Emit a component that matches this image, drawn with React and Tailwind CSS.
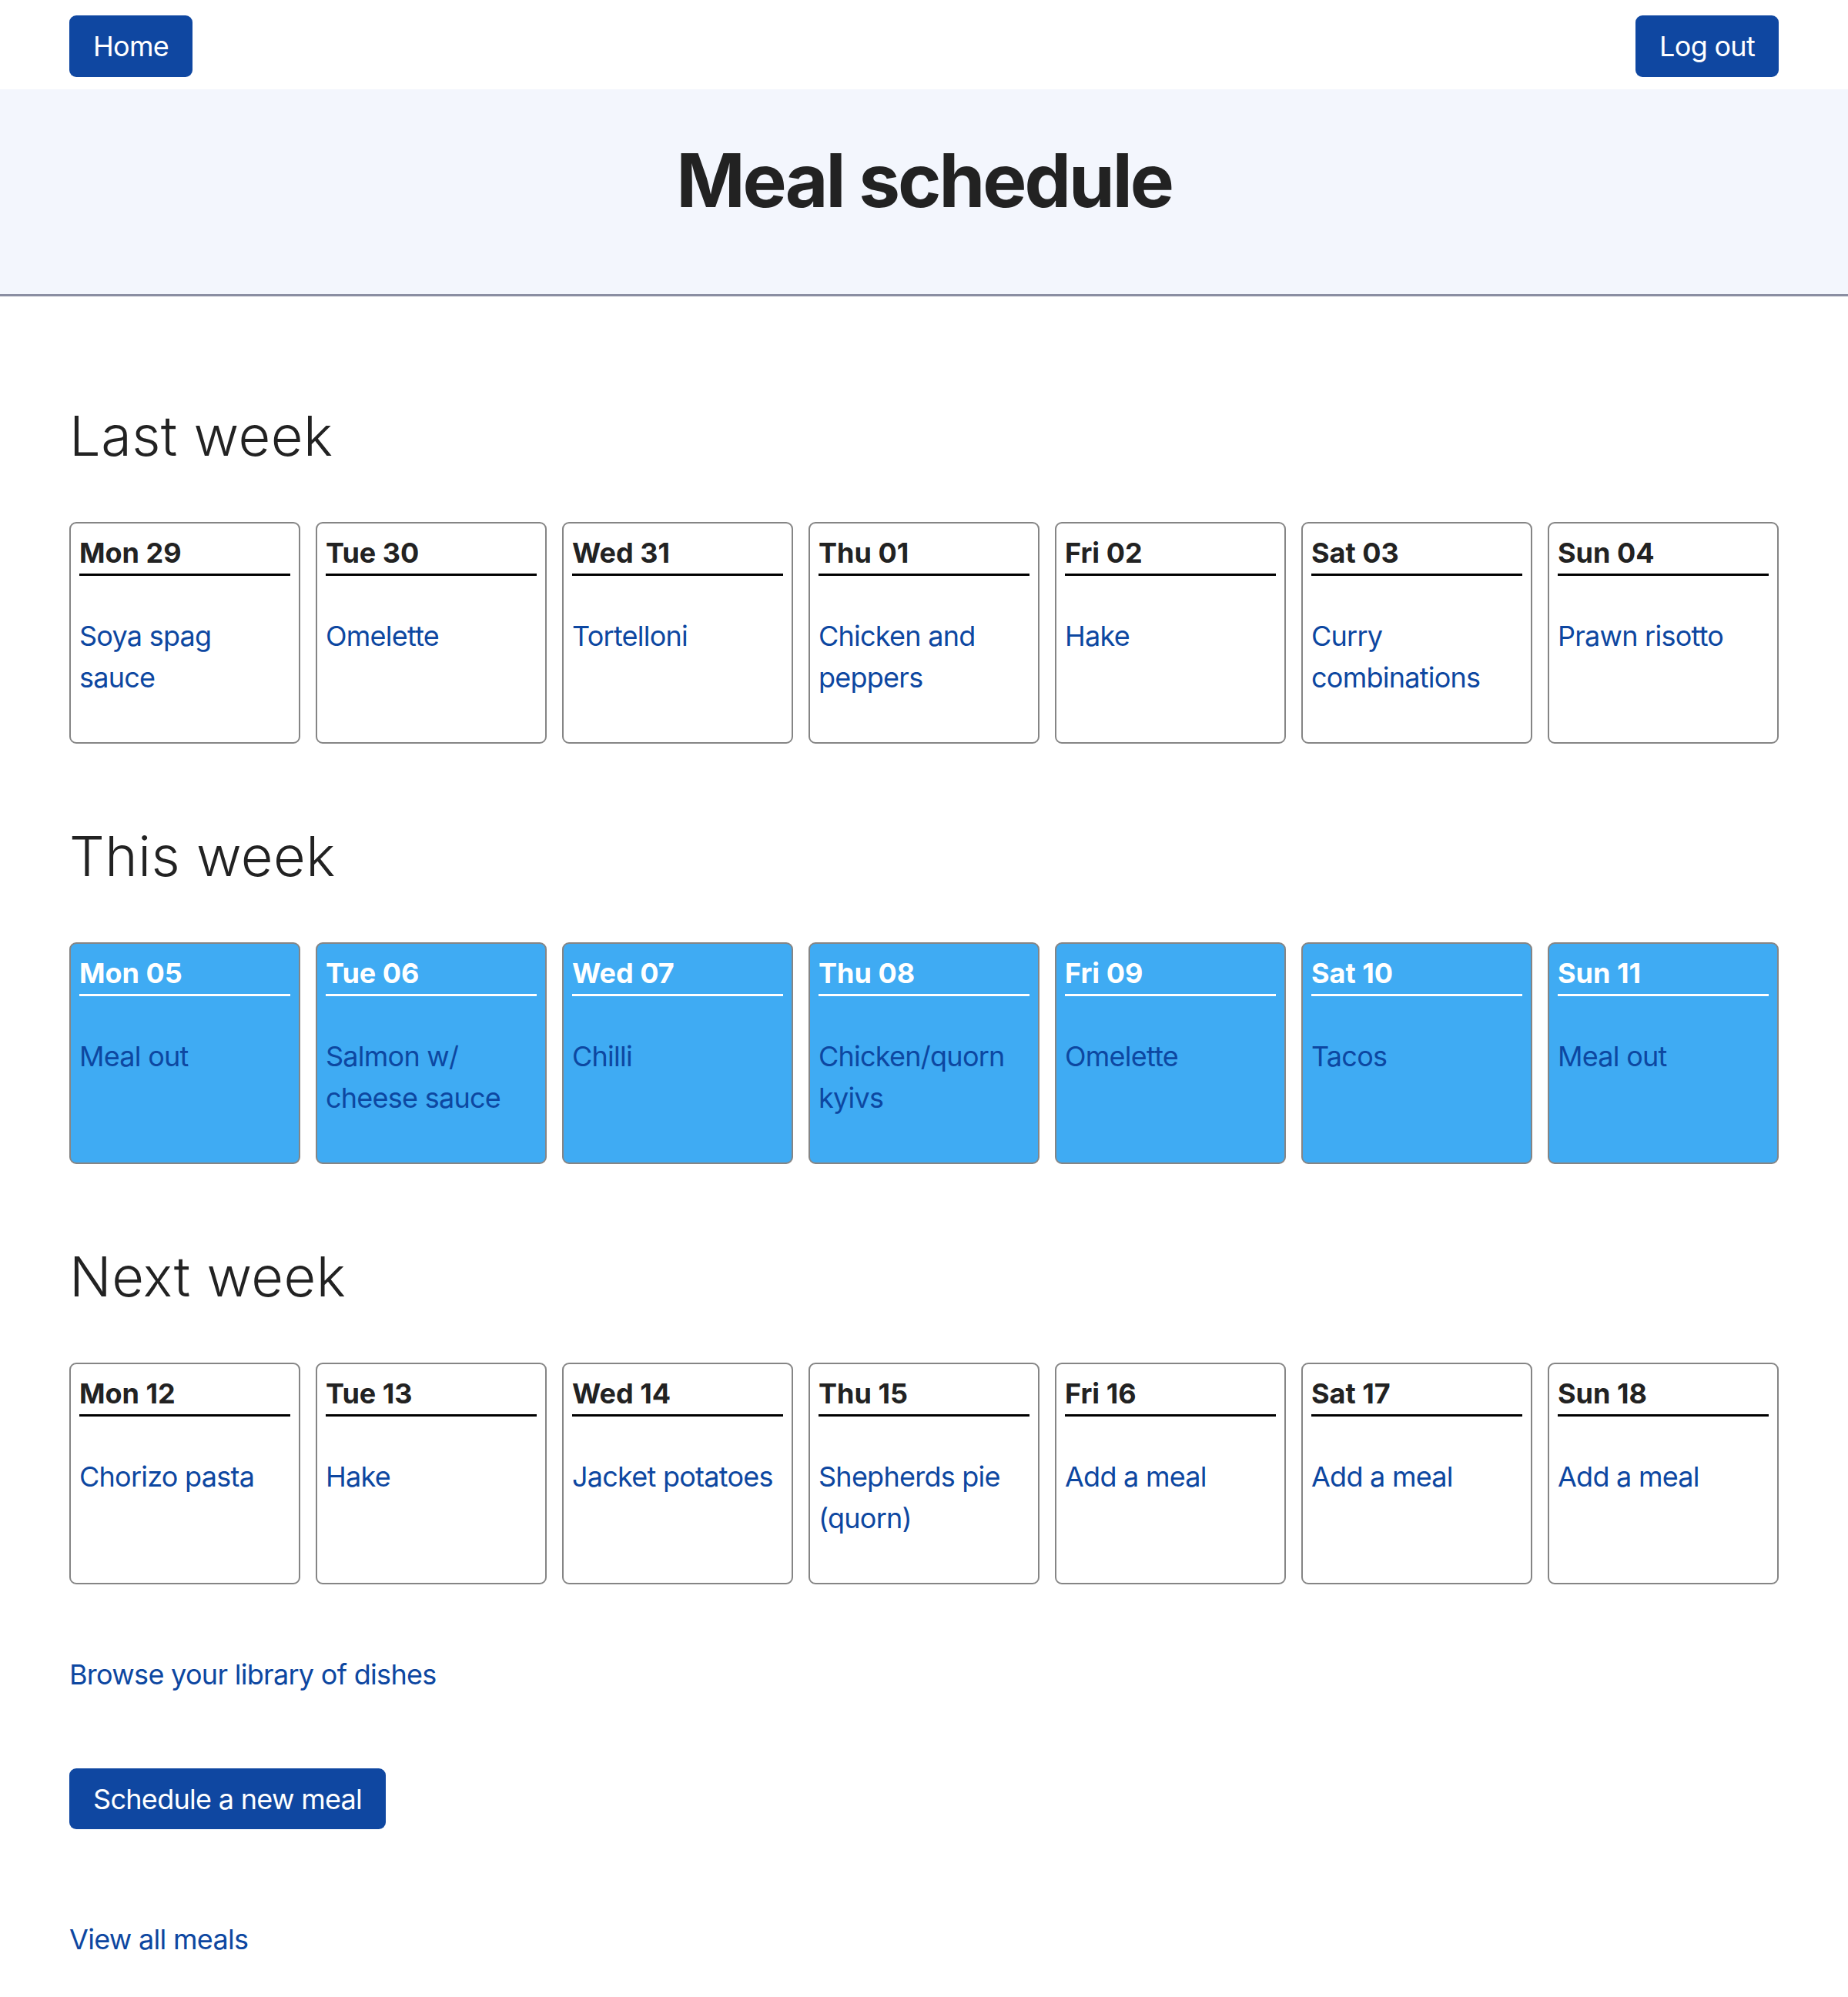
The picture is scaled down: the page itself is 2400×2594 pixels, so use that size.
import React from "react";

const weeks = [
  {
    title: "Last week",
    current: false,
    days: [
      { day: "Mon 29", meal: "Soya spag sauce" },
      { day: "Tue 30", meal: "Omelette" },
      { day: "Wed 31", meal: "Tortelloni" },
      { day: "Thu 01", meal: "Chicken and peppers" },
      { day: "Fri 02", meal: "Hake" },
      { day: "Sat 03", meal: "Curry combinations" },
      { day: "Sun 04", meal: "Prawn risotto" },
    ],
  },
  {
    title: "This week",
    current: true,
    days: [
      { day: "Mon 05", meal: "Meal out" },
      { day: "Tue 06", meal: "Salmon w/ cheese sauce" },
      { day: "Wed 07", meal: "Chilli" },
      { day: "Thu 08", meal: "Chicken/quorn kyivs" },
      { day: "Fri 09", meal: "Omelette" },
      { day: "Sat 10", meal: "Tacos" },
      { day: "Sun 11", meal: "Meal out" },
    ],
  },
  {
    title: "Next week",
    current: false,
    days: [
      { day: "Mon 12", meal: "Chorizo pasta" },
      { day: "Tue 13", meal: "Hake" },
      { day: "Wed 14", meal: "Jacket potatoes" },
      { day: "Thu 15", meal: "Shepherds pie (quorn)" },
      { day: "Fri 16", meal: "Add a meal" },
      { day: "Sat 17", meal: "Add a meal" },
      { day: "Sun 18", meal: "Add a meal" },
    ],
  },
];

const DayCard = ({ day, meal, current }) => (
  <div
    className={`h-[288px] rounded-[9px] border-2 border-[#858585] px-[11px] pt-[11px] ${
      current ? "bg-[#3fabf3]" : "bg-white"
    }`}
  >
    <div
      className={`border-b-[3px] text-[36px] font-bold leading-[54px] ${
        current ? "border-white text-white" : "border-black text-[#222]"
      }`}
    >
      {day}
    </div>
    <a
      href="#"
      className="mt-[51px] block text-[36px] leading-[54px] tracking-[-0.75px] text-[#0d47a1]"
    >
      {meal}
    </a>
  </div>
);

const Week = ({ title, days, current }) => (
  <section>
    <h2 className="text-[72px] font-light leading-[86px] tracking-[0.5px] text-[#222]">
      {title}
    </h2>
    <div className="mt-[69px] grid grid-cols-7 gap-[20px]">
      {days.map((d) => (
        <DayCard key={d.day} {...d} current={current} />
      ))}
    </div>
  </section>
);

const Button = ({ children, className = "h-[80px]" }) => (
  <button
    className={`${className} rounded-[9px] bg-[#0f47a1] px-[31px] text-[36px] tracking-[-0.7px] text-white`}
  >
    {children}
  </button>
);

export default function App() {
  return (
    <div className="min-h-[2594px] bg-white font-['Inter','Noto_Sans',sans-serif]">
      {/* Top nav */}
      <nav className="flex h-[116px] items-start justify-between px-[90px] pt-[20px]">
        <Button>Home</Button>
        <Button>Log out</Button>
      </nav>

      {/* Title band */}
      <header className="flex h-[269px] justify-center border-b-[3px] border-[#8a8ea2] bg-[#f3f6fd] pt-[61px]">
        <h1 className="text-[96px] font-bold leading-[115px] tracking-[-3px] text-[#222]">
          Meal schedule
        </h1>
      </header>

      <main className="px-[90px] pt-[138px]">
        <div className="flex flex-col gap-[103px]">
          {weeks.map((w) => (
            <Week key={w.title} {...w} />
          ))}
        </div>

        <a
          href="#"
          className="mt-[90px] block text-[36px] leading-[54px] tracking-[-0.7px] text-[#0d47a1]"
        >
          Browse your library of dishes
        </a>

        <div className="mt-[95px]">
          <Button className="h-[79px]">Schedule a new meal</Button>
        </div>

        <a
          href="#"
          className="mt-[116px] block text-[36px] leading-[54px] tracking-[-0.7px] text-[#0d47a1]"
        >
          View all meals
        </a>
      </main>
    </div>
  );
}
